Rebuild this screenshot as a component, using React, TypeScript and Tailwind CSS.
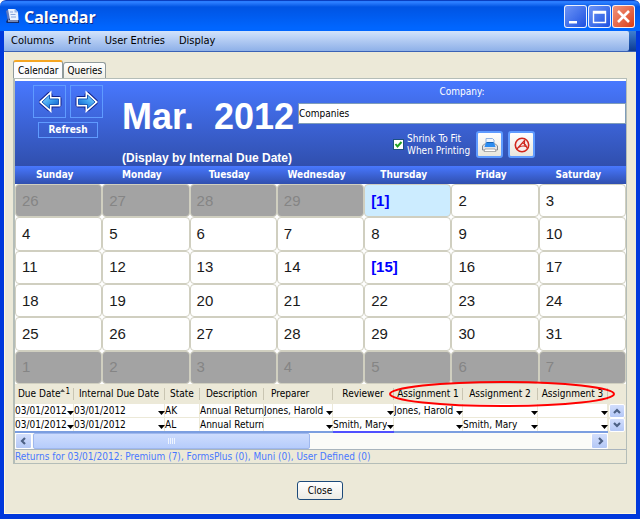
import { useState } from 'react';

const MENUS = ['Columns', 'Print', 'User Entries', 'Display'];
const TABS = ['Calendar', 'Queries'];
const DAYS = ['Sunday', 'Monday', 'Tuesday', 'Wednesday', 'Thursday', 'Friday', 'Saturday'];

type Day = { n: number; outside?: boolean; due?: boolean; selected?: boolean };

const WEEKS: Day[][] = [
  [
    { n: 26, outside: true },
    { n: 27, outside: true },
    { n: 28, outside: true },
    { n: 29, outside: true },
    { n: 1, due: true, selected: true },
    { n: 2 },
    { n: 3 },
  ],
  [4, 5, 6, 7, 8, 9, 10].map((n) => ({ n })),
  [11, 12, 13, 14, 15, 16, 17].map((n) => ({ n, due: n === 15 })),
  [18, 19, 20, 21, 22, 23, 24].map((n) => ({ n })),
  [25, 26, 27, 28, 29, 30, 31].map((n) => ({ n })),
  [1, 2, 3, 4, 5, 6, 7].map((n) => ({ n, outside: true })),
];

type Column = { label: string; width: string; options?: string[]; sorted?: boolean; left?: boolean; active?: boolean };

const DATES = ['03/01/2012', '03/15/2012'];
const STAFF = ['', 'Jones, Harold', 'Smith, Mary'];

const COLUMNS: Column[] = [
  { label: 'Due Date', width: 'w-[59px]', options: DATES, sorted: true },
  { label: 'Internal Due Date', width: 'w-[91px]', options: DATES },
  { label: 'State', width: 'w-[35px]' },
  { label: 'Description', width: 'w-[64px]' },
  { label: 'Preparer', width: 'w-[69px]', options: STAFF, left: true },
  { label: 'Reviewer', width: 'w-[61px]', options: STAFF, active: true },
  { label: 'Assignment 1', width: 'w-[69px]', options: STAFF },
  { label: 'Assignment 2', width: 'w-[75px]', options: STAFF },
  { label: 'Assignment 3', width: 'w-auto', options: STAFF },
];

const ROWS = [
  ['03/01/2012', '03/01/2012', 'AK', 'Annual Return', 'Jones, Harold', '', 'Jones, Harold', '', ''],
  ['03/01/2012', '03/01/2012', 'AL', 'Annual Return', '', 'Smith, Mary', '', 'Smith, Mary', ''],
];

function AppIcon() {
  return (
    <svg viewBox="0 0 14 16" className="h-4 w-[14px]" aria-hidden="true">
      <path d="M0 14l2-4h9l2 3v2H1z" fill="#132a66" />
      <path d="M0 3l3-2 1 9-2 3z" fill="#5c78bd" />
      <path d="M2 1h7l3 3 .5 8H4z" fill="#eaf2ff" />
      <path d="M8.500 1v3.500H12z" fill="#9ab5e6" />
      <path d="M4 4h3M4.500 6.500h5M5 9h5" stroke="#88a6dc" />
      <path d="M2 13h10" stroke="#b9c9ea" strokeWidth="1.200" />
    </svg>
  );
}

const ARROW = 'M11.500 5v4h9v5.500h-9v4L4 12z';

function ArrowIcon({ flip }: { flip?: boolean }) {
  return (
    <svg viewBox="0 0 24 24" className={flip ? 'h-6 w-6 -scale-x-100' : 'h-6 w-6'} aria-hidden="true">
      <defs>
        <linearGradient id="arrow" x1="0" x2="1" y1="0" y2="1">
          <stop offset="0" stopColor="#9adcff" />
          <stop offset="0.500" stopColor="#3ba0ef" />
          <stop offset="1" stopColor="#0a55c4" />
        </linearGradient>
      </defs>
      <path d={ARROW} fill="none" stroke="#10208a" strokeWidth="6" strokeLinejoin="round" />
      <path d={ARROW} fill="none" stroke="#fff" strokeWidth="4" strokeLinejoin="miter" />
      <path d={ARROW} fill="url(#arrow)" stroke="#1a5dbb" strokeWidth="1" />
    </svg>
  );
}

function PrinterIcon() {
  return (
    <svg viewBox="0 0 16 16" className="h-4 w-4" aria-hidden="true">
      <path d="M4 1.500h6.500L12 3v5H4z" fill="#eef5ff" stroke="#8fb2e0" />
      <path d="M2.500 7h11l2 2v4h-15V9z" fill="#e3e4e6" stroke="#858a92" />
      <path d="M4 5.500h8l1.500 4.500h-11z" fill="#2c8cf0" />
      <path d="M4.500 5.500h7" stroke="#1763b4" />
      <path d="M3 12h10l1 2.500H2z" fill="#fff" stroke="#9a9a9a" strokeWidth=".8" />
    </svg>
  );
}

function PdfIcon() {
  return (
    <svg viewBox="0 0 16 16" className="h-4 w-4" aria-hidden="true">
      <circle cx="8" cy="8" r="6.700" fill="#f6eeee" stroke="#d0271d" strokeWidth="1.600" />
      <path d="M2.500 12.500L11 3M8.500 6c2 .5 4 3 4.500 5M4.500 10.500c3-2 5.500-2 8.500-.5M10.500 3.500v5" fill="none" stroke="#d0271d" strokeWidth="1.200" />
    </svg>
  );
}

function Chevron({ d }: { d: string }) {
  return (
    <svg viewBox="0 0 10 10" className="h-[10px] w-[10px]" fill="none" stroke="#4d6185" strokeWidth="2.200" aria-hidden="true">
      <path d={d} />
    </svg>
  );
}

function Caret() {
  return (
    <svg viewBox="0 0 7 4" className="mt-1 h-1 w-[7px] shrink-0" aria-hidden="true">
      <path d="M0 0h7L3.500 4z" fill="#000" />
    </svg>
  );
}

const scrollButton =
  'flex shrink-0 items-center justify-center rounded-xs border border-white bg-linear-to-b from-[#d2defc] to-[#b4c8f6]';
const captionButton = 'flex h-[23px] w-[23px] items-center justify-center rounded-[3px] border border-white/90';
const blueButton = `${captionButton} bg-linear-to-br from-[#6c93f5] to-[#1e4fe0]`;
const navButton = 'flex h-[33px] w-[33px] items-center justify-center border border-[#5f9bff]';
const toolButton =
  'flex h-[27px] w-[27px] items-center justify-center rounded-[3px] border-2 border-[#5f9bff] bg-linear-to-b from-white to-[#e8e6dc]';

function TitleBar() {
  return (
    <header className="flex h-[31px] items-center gap-1 rounded-t-md border-t border-[#0a3fc0] bg-linear-to-b from-[#2a7dff] from-5% via-[#0054e3] via-20% to-[#0066ff] to-90% pr-[5px] pl-[6px]">
      <AppIcon />
      <h1 className="flex-1 pt-0.5 font-[Open_Sans,sans-serif] text-[16px] leading-5 font-bold text-white [text-shadow:1px_1px_#0a2a8c]">
        Calendar
      </h1>
      <div className="flex gap-px pt-px">
        <button type="button" aria-label="Minimize" className={blueButton}>
          <svg viewBox="0 0 21 21" className="h-[21px] w-[21px]"><path d="M4 15h8v2.500H4z" fill="#fff" /></svg>
        </button>
        <button type="button" aria-label="Maximize" className={blueButton}>
          <svg viewBox="0 0 21 21" className="h-[21px] w-[21px]">
            <path d="M4.500 5.500h12v11h-12zM4.500 7h12" fill="none" stroke="#fff" strokeWidth="1.400" />
          </svg>
        </button>
        <button type="button" aria-label="Close window" className={`${captionButton} bg-linear-to-br from-[#f0937a] to-[#d93a0c]`}>
          <svg viewBox="0 0 21 21" className="h-[21px] w-[21px]"><path d="M5 5l11 11M16 5L5 16" stroke="#fff" strokeWidth="2.600" /></svg>
        </button>
      </div>
    </header>
  );
}

function MonthHeader() {
  const [company, setCompany] = useState('Companies');
  const [shrink, setShrink] = useState(true);

  return (
    <div className="flex h-[85px] bg-linear-to-b from-[#4878ff] to-[#304fae] text-white">
      <div className="flex w-[106px] shrink-0 flex-col items-center gap-1 pt-1">
        <div className="flex gap-1">
          <button type="button" aria-label="Previous month" className={navButton}>
            <ArrowIcon />
          </button>
          <button type="button" aria-label="Next month" className={navButton}>
            <ArrowIcon flip />
          </button>
        </div>
        <button type="button" className="h-4 w-[60px] border border-[#5f9bff] leading-3 font-bold">
          Refresh
        </button>
      </div>
      <div className="flex w-[177px] shrink-0 flex-col justify-between pt-4 pl-px font-[Liberation_Sans,Arial,sans-serif] font-bold">
        <h2 className="text-[36px] leading-10 whitespace-pre">Mar.  2012</h2>
        <p className="text-[12px] leading-4 whitespace-nowrap">(Display by Internal Due Date)</p>
      </div>
      <div className="min-w-0 flex-1">
        <label htmlFor="company" className="block h-[22px] text-center leading-[22px]">
          Company:
        </label>
        <input
          id="company"
          value={company}
          onChange={(e) => setCompany(e.target.value)}
          className="block h-[21px] w-full border border-[#7f9db9] bg-white text-black"
        />
        <div className="flex items-center gap-[5px] pt-[7px] pl-[95px]">
          <label className="flex items-center gap-[3px] leading-3">
            <span className="grid">
              <input
                type="checkbox"
                checked={shrink}
                onChange={(e) => setShrink(e.target.checked)}
                className="col-start-1 row-start-1 h-[11px] w-[11px] appearance-none border border-[#1c5180] bg-white"
              />
              {shrink && (
                <svg viewBox="0 0 11 11" className="pointer-events-none col-start-1 row-start-1 h-[11px] w-[11px]" aria-hidden="true">
                  <path d="M2.500 5l2 2.500 4-4.500" fill="none" stroke="#21a121" strokeWidth="2" />
                </svg>
              )}
            </span>
            <span className="w-16 whitespace-nowrap">Shrink To Fit<br />When Printing</span>
          </label>
          <button type="button" aria-label="Print" className={toolButton}>
            <PrinterIcon />
          </button>
          <button type="button" aria-label="Export PDF" className={toolButton}>
            <PdfIcon />
          </button>
        </div>
      </div>
    </div>
  );
}

function MonthGrid() {
  return (
    <table className="h-[218px] w-full table-fixed border-separate border-spacing-0 bg-white">
      <thead>
        <tr className="h-[18px] bg-linear-to-b from-[#4878ff] to-[#304fae] leading-4 text-white">
          {DAYS.map((d) => <th key={d} className="p-0 pr-2 font-bold">{d}</th>)}
        </tr>
      </thead>
      <tbody className="font-[Liberation_Sans,Arial,sans-serif] text-[15px] leading-5 text-[#1a1a1a]">
        {WEEKS.map((week, w) => (
          <tr key={w}>
            {week.map((day) => (
              <td
                key={day.n}
                className={`rounded-[4px] border border-[#d0cfc0] py-0 pr-0 pl-[6px] ${
                  day.outside ? 'bg-[#a3a3a3] text-[#858585]' : day.selected ? 'bg-[#ccecff]' : 'bg-white'
                } ${day.due ? 'font-bold text-[#0000ff]' : ''}`}
              >
                {day.due ? `[${day.n}]` : day.n}
              </td>
            ))}
          </tr>
        ))}
      </tbody>
    </table>
  );
}

function ReturnsTable() {
  return (
    <div className="border-b border-[#a9b4bd] bg-[#ece9d8]">
      <div className="relative flex items-end">
        <div className="min-w-0 flex-1">
          <table className="w-full table-fixed border-separate border-spacing-0 leading-3">
            <thead>
              <tr className="h-5">
                {COLUMNS.map((c) => (
                  <th key={c.label} className={`${c.width} p-0 font-normal whitespace-nowrap`}>
                    <div className={`flex h-3 border-r border-[#c9c5b2] ${c.left ? 'pl-[7px]' : 'justify-center'}`}>
                      {c.label}
                      {c.sorted && (
                        <span className="flex text-[8px] leading-2">
                          <svg viewBox="0 0 5 5" className="h-[5px] w-[5px]" aria-hidden="true">
                            <path d="M0 4h5L2.500 1z" fill="#555" />
                          </svg>
                          1
                        </span>
                      )}
                    </div>
                  </th>
                ))}
              </tr>
            </thead>
            <tbody className="bg-white">
              {ROWS.map((row, r) => (
                <tr key={r}>
                  {row.map((value, i) => {
                    const col = COLUMNS[i];
                    const line = r < ROWS.length - 1
                      ? 'border-b border-b-[#ece9d8]'
                      : col.active ? 'border-b-2 border-b-[#4f4fff]' : 'border-b-2 border-b-[#7b9ee0]';
                    return (
                      <td key={col.label} className={`h-[14px] p-0 whitespace-nowrap shadow-[inset_-1px_0_#ece9d8] ${line}`}>
                        {col.options ? (
                          <div className="flex items-center">
                            <select aria-label={col.label} defaultValue={value} className="h-[13px] min-w-0 flex-1 appearance-none">
                              {col.options.map((o) => <option key={o} value={o}>{o}</option>)}
                            </select>
                            <Caret />
                          </div>
                        ) : value}
                      </td>
                    );
                  })}
                </tr>
              ))}
            </tbody>
          </table>
        </div>
        <div className="flex w-[18px] shrink-0 flex-col items-center pb-px">
          <button type="button" aria-label="Scroll up" className={`${scrollButton} h-[14px] w-4`}><Chevron d="M2 7l3-3 3 3" /></button>
          <button type="button" aria-label="Scroll down" className={`${scrollButton} h-[14px] w-4`}><Chevron d="M2 3l3 3 3-3" /></button>
        </div>
        {/* red marker round the assignment columns */}
        <svg viewBox="0 0 226 26" className="pointer-events-none absolute -top-[3px] right-[11px] h-[26px] w-[226px]" aria-hidden="true">
          <ellipse cx="113" cy="13" rx="112" ry="12" fill="none" stroke="#f00" strokeWidth="2" />
        </svg>
      </div>
      <div className="mr-[18px] flex h-4 bg-[#fbfbf8]">
        <button type="button" aria-label="Scroll left" className={`${scrollButton} w-[17px]`}><Chevron d="M6 2L3 5l3 3" /></button>
        <div className="ml-px flex w-[277px] items-center justify-center gap-px rounded-xs border border-[#9fb8ee] bg-linear-to-b from-[#cddcfd] to-[#b6ccfb]">
          {[0, 1, 2, 3].map((n) => <span key={n} className="h-[6px] w-px bg-[#eef4fe]" />)}
        </div>
        <button type="button" aria-label="Scroll right" className={`${scrollButton} ml-auto w-[17px]`}><Chevron d="M4 2l3 3-3 3" /></button>
      </div>
    </div>
  );
}

export default function App() {
  const [tab, setTab] = useState('Calendar');

  return (
    <div className="font-[DejaVu_Sans_Condensed,Tahoma,sans-serif] text-[10px] text-black">
      <TitleBar />
      <div className="border-x-4 border-b-[5px] border-[#0038dc] bg-[#ece9d8] shadow-[inset_1px_-1px_#fff8e0]">
        <nav className="flex h-[21px] border-b border-[#3b62b5] bg-linear-to-b from-[#3f7fd0] to-[#0c3a94] pr-[7px] text-[11px]">
          <div className="flex flex-1 gap-[14px] rounded-r-xs bg-linear-to-b from-[#d3e3fb] to-[#8eb0e8] pl-[7px]">
            {MENUS.map((m) => <button key={m} type="button">{m}</button>)}
          </div>
        </nav>
        <main className="px-[9px] pt-2">
          <div role="tablist" className="flex items-end">
            {TABS.map((t) => (
              <button
                key={t}
                type="button"
                role="tab"
                aria-selected={t === tab}
                onClick={() => setTab(t)}
                className={
                  t === tab
                    ? 'h-[18px] rounded-t-[3px] border-x border-t-2 border-x-[#919b9c] border-t-[#f5a623] bg-[#fcfcfe] px-1'
                    : 'h-4 rounded-t-[3px] border border-b-0 border-[#919b9c] bg-linear-to-b from-white to-[#f0efe6] px-[3px]'
                }
              >
                {t}
              </button>
            ))}
          </div>
          <section className="border border-l-2 border-[#b4bdb8]">
            <div className="h-0.5 bg-white" />
            <MonthHeader />
            <MonthGrid />
            <ReturnsTable />
            <p className="leading-[13px] text-[#4878ff]">
              Returns for 03/01/2012: Premium (7), FormsPlus (0), Muni (0), User Defined (0)
            </p>
          </section>
        </main>
        <footer className="flex justify-center pt-[17px] pb-[14px]">
          <button type="button" className="h-[19px] w-[46px] rounded-[3px] border border-[#1c4a7a] bg-linear-to-b from-white to-[#ecebe5] leading-4">
            Close
          </button>
        </footer>
      </div>
    </div>
  );
}
